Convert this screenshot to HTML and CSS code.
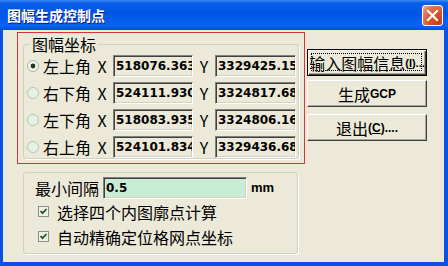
FILE: index.html
```html
<!DOCTYPE html>
<html lang="zh">
<head>
    <meta charset="UTF-8">
    <title>图幅生成控制点</title>
    <link rel="stylesheet" href="styles.css">
</head>
<body>

    <div class="window">
        <div class="titlebar">
            <span class="title">图幅生成控制点</span>
            <button class="close">
                <svg width="13" height="13" viewBox="0 0 13 13"><path d="M2 2 L11 11 M11 2 L2 11" stroke="#fff" stroke-width="2.2" stroke-linecap="square"/></svg>
            </button>
        </div>

        <div class="dialog">
            <div class="left">
                <div class="focus-frame">
                    <fieldset class="group">
                        <legend>图幅坐标</legend>

                        <div class="row">
                            <svg class="radio" width="12" height="12" viewBox="0 0 12 12"><circle cx="6" cy="6" r="5.5" fill="#f4f4ee" stroke="#a8b0a4"/><circle cx="6" cy="6" r="2.4" fill="#1d3d1d"/></svg>
                            <span class="corner">左上角</span>
                            <span class="axis">X</span>
                            <input class="coord" readonly value="518076.363">
                            <span class="axis">Y</span>
                            <input class="coord wide" readonly value="3329425.15">
                        </div>
                        <div class="row">
                            <svg class="radio" width="12" height="12" viewBox="0 0 12 12"><circle cx="6" cy="6" r="5.5" fill="#e4f2e2" stroke="#b8c4b4"/></svg>
                            <span class="corner">右下角</span>
                            <span class="axis">X</span>
                            <input class="coord" readonly value="524111.930">
                            <span class="axis">Y</span>
                            <input class="coord wide" readonly value="3324817.68">
                        </div>
                        <div class="row">
                            <svg class="radio" width="12" height="12" viewBox="0 0 12 12"><circle cx="6" cy="6" r="5.5" fill="#e4f2e2" stroke="#b8c4b4"/></svg>
                            <span class="corner">左下角</span>
                            <span class="axis">X</span>
                            <input class="coord" readonly value="518083.935">
                            <span class="axis">Y</span>
                            <input class="coord wide" readonly value="3324806.16">
                        </div>
                        <div class="row">
                            <svg class="radio" width="12" height="12" viewBox="0 0 12 12"><circle cx="6" cy="6" r="5.5" fill="#e4f2e2" stroke="#b8c4b4"/></svg>
                            <span class="corner">右上角</span>
                            <span class="axis">X</span>
                            <input class="coord" readonly value="524101.834">
                            <span class="axis">Y</span>
                            <input class="coord wide" readonly value="3329436.68">
                        </div>
                    </fieldset>
                </div>

                <div class="options">
                    <div class="row">
                        <span>最小间隔</span>
                        <input class="gap-input" value="0.5">
                        <span class="unit">mm</span>
                    </div>
                    <div class="check-row">
                        <svg class="check" width="11" height="11" viewBox="0 0 11 11"><rect x="0.5" y="0.5" width="10" height="10" fill="#f0f0ea" stroke="#8c8f8c"/><path d="M2.5 5 L4.5 7.2 L8.5 3" fill="none" stroke="#1e5a1e" stroke-width="1.8"/></svg>
                        <span>选择四个内图廓点计算</span>
                    </div>
                    <div class="check-row">
                        <svg class="check" width="11" height="11" viewBox="0 0 11 11"><rect x="0.5" y="0.5" width="10" height="10" fill="#f0f0ea" stroke="#8c8f8c"/><path d="M2.5 5 L4.5 7.2 L8.5 3" fill="none" stroke="#1e5a1e" stroke-width="1.8"/></svg>
                        <span>自动精确定位格网点坐标</span>
                    </div>
                </div>
            </div>

            <div class="buttons">
                <button class="btn default">输入图幅信息<b class="acc">(<u>I</u>)...</b></button>
                <button class="btn">生成<b class="acc">GCP</b></button>
                <button class="btn">退出<b class="acc">(<u>C</u>)....</b></button>
            </div>
        </div>
    </div>

</body>
</html>
```

FILE: styles.css
```css
* {
    margin: 0;
    padding: 0;
    box-sizing: border-box;
}

body {
    width: 448px;
    height: 266px;
    font-family: "Noto Sans CJK SC", sans-serif;
    font-size: 16px;
    line-height: 18px;
    color: #000;
    background: #fff;
}

.window {
    height: 266px;
    display: flex;
    flex-direction: column;
    border: solid #0852e6;
    border-width: 0 4px 4px 3px;
}

.titlebar {
    height: 30px;
    margin: 0 -4px 0 -3px;
    padding: 0 5px 0 7px;
    display: flex;
    align-items: center;
    justify-content: space-between;
    background: linear-gradient(to bottom, #3b8cf5 0, #0a5fe8 10%, #0055e5 45%, #0a63f4 85%, #0757eb 94%, #0a46d0 100%);
}

.title {
    color: #fff;
    font-size: 14px;
    font-weight: bold;
    text-shadow: 1px 1px 0 #0a1a8a;
}

.close {
    width: 21px;
    height: 21px;
    border: 1px solid #fff;
    border-radius: 3px;
    display: flex;
    justify-content: center;
    align-items: center;
    background: radial-gradient(circle at 85% 85%, #c33e14 0%, #dc5a2e 50%, #e47a55 75%, #f3b9a2 100%);
}

.dialog {
    flex: 1;
    display: flex;
    background: #ece9d8;
    padding: 2px 0 0 14px;
}

.left {
    width: 288px;
}

.focus-frame {
    height: 132px;
    border: 1px solid #d8353a;
    padding: 2px 5px 4px 5px;
}

.group {
    border: 1px solid #d0d0bf;
    border-radius: 3px;
    padding: 2px 2px 0 2px;
    box-shadow: 1px 1px 0 #fff;
}

.group legend {
    margin-left: 4px;
    padding: 0 2px;
    line-height: 18px;
}

.row {
    height: 22px;
    display: flex;
    align-items: center;
    margin-top: 5px;
}

.group .row:first-of-type {
    margin-top: 0;
}

.radio {
    margin-left: 1px;
    flex-shrink: 0;
}

.corner {
    width: 48px;
    margin-left: 4px;
}

.axis {
    width: 22px;
    text-align: center;
}

.coord, .gap-input {
    height: 22px;
    width: 80px;
    padding-left: 2px;
    font-family: "DejaVu Sans", sans-serif;
    font-size: 12px;
    font-weight: bold;
    color: #000;
    background: #ece9d8;
    border: 1px solid;
    border-color: #808080 #fff #fff #808080;
    box-shadow: inset 1px 1px 0 #404040, inset -1px -1px 0 #d4d0c8;
    outline: none;
}

.coord.wide {
    width: 81px;
}

.options {
    width: 275px;
    height: 82px;
    margin: 8px 0 0 6px;
    border: 1px solid #d0d0bf;
    border-radius: 3px;
    padding: 4px 0 0 11px;
    box-shadow: 1px 1px 0 #fff;
}

.options .row {
    margin-top: 0;
}

.gap-input {
    width: 144px;
    margin-left: 4px;
    background: #c8ecd4;
}

.unit {
    margin-left: 4px;
    font-family: "Liberation Sans", sans-serif;
    font-size: 13px;
    font-weight: bold;
}

.check-row {
    height: 25px;
    display: flex;
    align-items: center;
    padding-left: 3px;
}

.check {
    margin-right: 8px;
}

.buttons {
    display: flex;
    flex-direction: column;
    margin-left: 2px;
    padding-top: 17px;
}

.btn {
    position: relative;
    width: 120px;
    height: 27px;
    margin-top: 4px;
    padding: 0 1px;
    display: flex;
    justify-content: center;
    align-items: center;
    white-space: nowrap;
    font-family: "Noto Sans CJK SC", sans-serif;
    font-size: 16px;
    background: #ece9d8;
    border: 1px solid;
    border-color: #fff #404040 #404040 #fff;
    box-shadow: inset -1px -1px 0 #aca899;
}

.btn:first-child {
    margin-top: 0;
}

.btn:last-child {
    margin-top: 7px;
}

.btn.default {
    border-color: #000;
    box-shadow: inset 1px 1px 0 #fff, inset -1px -1px 0 #404040, inset -2px -2px 0 #aca899;
}

.btn.default::after {
    content: "";
    position: absolute;
    inset: 3px 4px 4px 3px;
    border: 1px dotted #000;
}

.acc {
    font-family: "Liberation Sans", sans-serif;
    font-size: 12px;
    font-weight: bold;
}

.btn.default .acc {
    font-size: 11px;
}
```
